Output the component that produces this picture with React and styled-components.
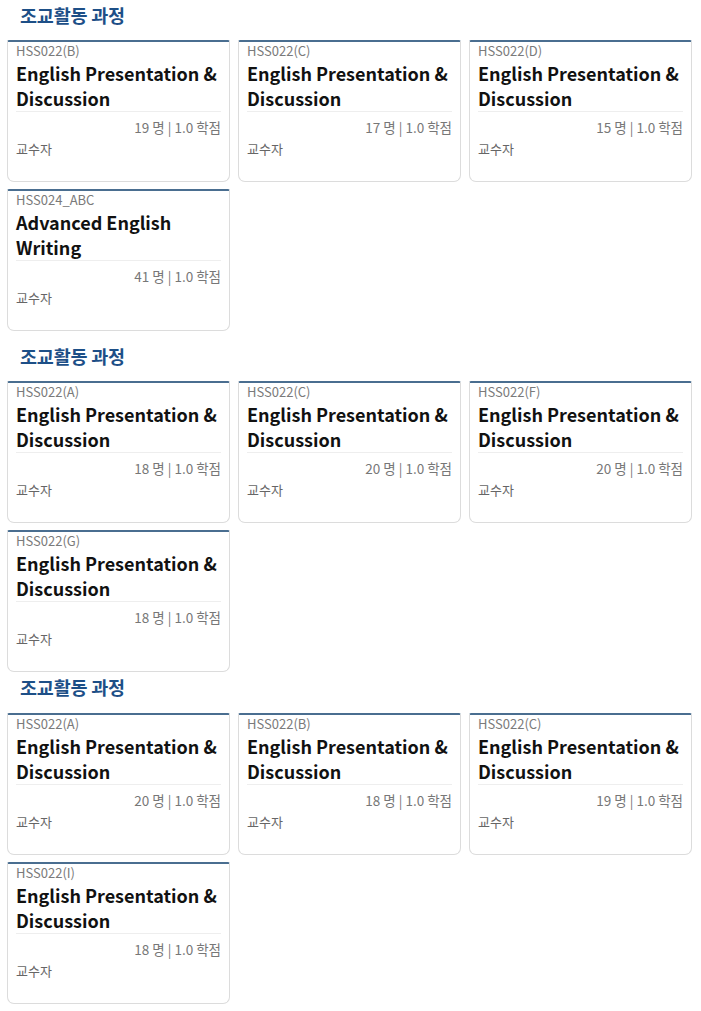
import styled, { createGlobalStyle } from "styled-components"

const GlobalStyle = createGlobalStyle`
  body {
    margin: 0;
    background: #ffffff;
    font-family: "Noto Sans CJK KR", "Noto Sans", sans-serif;
  }
`

const Page = styled.div`
  width: 701px;
  display: flex;
  flex-direction: column;
`

const Section = styled.section`
  display: flex;
  flex-direction: column;
  margin-top: ${(props) => props.top}px;
`

const SectionTitle = styled.h2`
  margin: 0;
  height: ${(props) => props.height}px;
  padding-left: 20px;
  font-size: 18.5px;
  font-weight: 700;
  line-height: 30px;
  color: #1d4f87;
  letter-spacing: -0.2px;
`

const CardGrid = styled.div`
  display: grid;
  grid-template-columns: repeat(3, 223px);
  column-gap: 8px;
  row-gap: 7px;
  padding-left: 7px;
`

const Card = styled.div`
  height: 142px;
  box-sizing: border-box;
  border: 1px solid #dcdcdc;
  border-top: 2px solid #4a6e90;
  border-radius: 2px 2px 7px 7px;
  padding: 0 8px 0 8px;
  display: flex;
  flex-direction: column;
`

const Code = styled.div`
  font-size: 13px;
  line-height: 19px;
  color: #7a7a7a;
  margin-top: -1px;
`

const Title = styled.div`
  font-size: 18px;
  font-weight: 700;
  line-height: 25px;
  color: #111;
  margin-top: 1px;
  border-bottom: 1px solid #eeeeee;
`

const Meta = styled.div`
  text-align: right;
  font-size: 13.5px;
  line-height: 18px;
  color: #777;
  margin-top: 6px;
`

const Professor = styled.div`
  font-size: 13px;
  line-height: 19px;
  color: #666;
  margin-top: 3px;
`

const sections = [
  {
    top: 0,
    head: 40,
    cards: [
      { code: "HSS022(B)", title: "English Presentation & Discussion", count: 19 },
      { code: "HSS022(C)", title: "English Presentation & Discussion", count: 17 },
      { code: "HSS022(D)", title: "English Presentation & Discussion", count: 15 },
      { code: "HSS024_ABC", title: "Advanced English Writing", count: 41 },
    ],
  },
  {
    top: 10,
    head: 40,
    cards: [
      { code: "HSS022(A)", title: "English Presentation & Discussion", count: 18 },
      { code: "HSS022(C)", title: "English Presentation & Discussion", count: 20 },
      { code: "HSS022(F)", title: "English Presentation & Discussion", count: 20 },
      { code: "HSS022(G)", title: "English Presentation & Discussion", count: 18 },
    ],
  },
  {
    top: 0,
    head: 41,
    cards: [
      { code: "HSS022(A)", title: "English Presentation & Discussion", count: 20 },
      { code: "HSS022(B)", title: "English Presentation & Discussion", count: 18 },
      { code: "HSS022(C)", title: "English Presentation & Discussion", count: 19 },
      { code: "HSS022(I)", title: "English Presentation & Discussion", count: 18 },
    ],
  },
]

export default function App() {
  return (
    <Page>
      <GlobalStyle />
      {sections.map((section, i) => (
        <Section key={i} top={section.top}>
          <SectionTitle height={section.head}>조교활동 과정</SectionTitle>
          <CardGrid>
            {section.cards.map((card, j) => (
              <Card key={j}>
                <Code>{card.code}</Code>
                <Title>{card.title}</Title>
                <Meta>{card.count} 명 | 1.0 학점</Meta>
                <Professor>교수자</Professor>
              </Card>
            ))}
          </CardGrid>
        </Section>
      ))}
    </Page>
  )
}
